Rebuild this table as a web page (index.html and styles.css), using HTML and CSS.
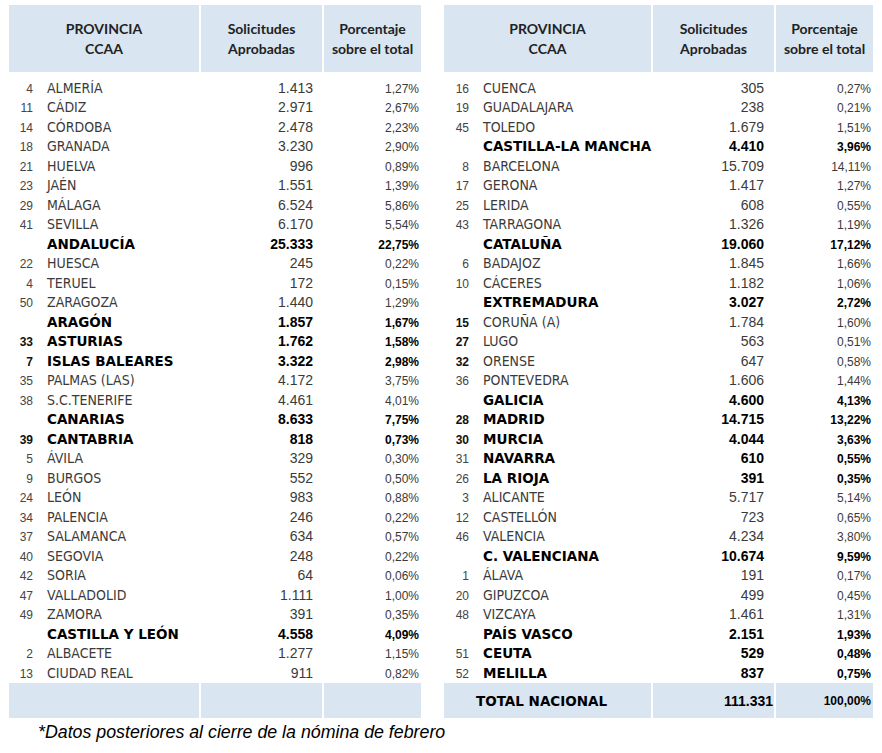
FILE: index.html
```html
<!DOCTYPE html>
<html lang="es">
<head>
<meta charset="utf-8">
<link rel="stylesheet" href="styles.css">
</head>
<body>
<div class="page">
  <div class="tables">
    <div class="tbl tbl-left">
      <div class="grid hdr">
        <div class="hc">PROVINCIA<br>CCAA</div>
        <div class="hc">Solicitudes<br>Aprobadas</div>
        <div class="hc">Porcentaje<br>sobre el total</div>
      </div>
      <div class="body">
        <div class="grid row"><div class="pc"><span class="code">4</span><span class="name">ALMERÍA</span></div><div class="val">1.413</div><div class="pct">1,27%</div></div>
        <div class="grid row"><div class="pc"><span class="code">11</span><span class="name">CÁDIZ</span></div><div class="val">2.971</div><div class="pct">2,67%</div></div>
        <div class="grid row"><div class="pc"><span class="code">14</span><span class="name">CÓRDOBA</span></div><div class="val">2.478</div><div class="pct">2,23%</div></div>
        <div class="grid row"><div class="pc"><span class="code">18</span><span class="name">GRANADA</span></div><div class="val">3.230</div><div class="pct">2,90%</div></div>
        <div class="grid row"><div class="pc"><span class="code">21</span><span class="name">HUELVA</span></div><div class="val">996</div><div class="pct">0,89%</div></div>
        <div class="grid row"><div class="pc"><span class="code">23</span><span class="name">JAÉN</span></div><div class="val">1.551</div><div class="pct">1,39%</div></div>
        <div class="grid row"><div class="pc"><span class="code">29</span><span class="name">MÁLAGA</span></div><div class="val">6.524</div><div class="pct">5,86%</div></div>
        <div class="grid row"><div class="pc"><span class="code">41</span><span class="name">SEVILLA</span></div><div class="val">6.170</div><div class="pct">5,54%</div></div>
        <div class="grid row bold"><div class="pc"><span class="code"></span><span class="name">ANDALUCÍA</span></div><div class="val">25.333</div><div class="pct">22,75%</div></div>
        <div class="grid row"><div class="pc"><span class="code">22</span><span class="name">HUESCA</span></div><div class="val">245</div><div class="pct">0,22%</div></div>
        <div class="grid row"><div class="pc"><span class="code">4</span><span class="name">TERUEL</span></div><div class="val">172</div><div class="pct">0,15%</div></div>
        <div class="grid row"><div class="pc"><span class="code">50</span><span class="name">ZARAGOZA</span></div><div class="val">1.440</div><div class="pct">1,29%</div></div>
        <div class="grid row bold"><div class="pc"><span class="code"></span><span class="name">ARAGÓN</span></div><div class="val">1.857</div><div class="pct">1,67%</div></div>
        <div class="grid row bold"><div class="pc"><span class="code cb">33</span><span class="name">ASTURIAS</span></div><div class="val">1.762</div><div class="pct">1,58%</div></div>
        <div class="grid row bold"><div class="pc"><span class="code cb">7</span><span class="name">ISLAS BALEARES</span></div><div class="val">3.322</div><div class="pct">2,98%</div></div>
        <div class="grid row"><div class="pc"><span class="code">35</span><span class="name">PALMAS (LAS)</span></div><div class="val">4.172</div><div class="pct">3,75%</div></div>
        <div class="grid row"><div class="pc"><span class="code">38</span><span class="name">S.C.TENERIFE</span></div><div class="val">4.461</div><div class="pct">4,01%</div></div>
        <div class="grid row bold"><div class="pc"><span class="code"></span><span class="name">CANARIAS</span></div><div class="val">8.633</div><div class="pct">7,75%</div></div>
        <div class="grid row bold"><div class="pc"><span class="code cb">39</span><span class="name">CANTABRIA</span></div><div class="val">818</div><div class="pct">0,73%</div></div>
        <div class="grid row"><div class="pc"><span class="code">5</span><span class="name">ÁVILA</span></div><div class="val">329</div><div class="pct">0,30%</div></div>
        <div class="grid row"><div class="pc"><span class="code">9</span><span class="name">BURGOS</span></div><div class="val">552</div><div class="pct">0,50%</div></div>
        <div class="grid row"><div class="pc"><span class="code">24</span><span class="name">LEÓN</span></div><div class="val">983</div><div class="pct">0,88%</div></div>
        <div class="grid row"><div class="pc"><span class="code">34</span><span class="name">PALENCIA</span></div><div class="val">246</div><div class="pct">0,22%</div></div>
        <div class="grid row"><div class="pc"><span class="code">37</span><span class="name">SALAMANCA</span></div><div class="val">634</div><div class="pct">0,57%</div></div>
        <div class="grid row"><div class="pc"><span class="code">40</span><span class="name">SEGOVIA</span></div><div class="val">248</div><div class="pct">0,22%</div></div>
        <div class="grid row"><div class="pc"><span class="code">42</span><span class="name">SORIA</span></div><div class="val">64</div><div class="pct">0,06%</div></div>
        <div class="grid row"><div class="pc"><span class="code">47</span><span class="name">VALLADOLID</span></div><div class="val">1.111</div><div class="pct">1,00%</div></div>
        <div class="grid row"><div class="pc"><span class="code">49</span><span class="name">ZAMORA</span></div><div class="val">391</div><div class="pct">0,35%</div></div>
        <div class="grid row bold"><div class="pc"><span class="code"></span><span class="name">CASTILLA Y LEÓN</span></div><div class="val">4.558</div><div class="pct">4,09%</div></div>
        <div class="grid row"><div class="pc"><span class="code">2</span><span class="name">ALBACETE</span></div><div class="val">1.277</div><div class="pct">1,15%</div></div>
        <div class="grid row"><div class="pc"><span class="code">13</span><span class="name">CIUDAD REAL</span></div><div class="val">911</div><div class="pct">0,82%</div></div>
      </div>
      <div class="grid foot">
        <div class="fc"></div>
        <div class="fc"></div>
        <div class="fc"></div>
      </div>
    </div>

    <div class="tbl tbl-right">
      <div class="grid hdr">
        <div class="hc">PROVINCIA<br>CCAA</div>
        <div class="hc">Solicitudes<br>Aprobadas</div>
        <div class="hc">Porcentaje<br>sobre el total</div>
      </div>
      <div class="body">
        <div class="grid row"><div class="pc"><span class="code">16</span><span class="name">CUENCA</span></div><div class="val">305</div><div class="pct">0,27%</div></div>
        <div class="grid row"><div class="pc"><span class="code">19</span><span class="name">GUADALAJARA</span></div><div class="val">238</div><div class="pct">0,21%</div></div>
        <div class="grid row"><div class="pc"><span class="code">45</span><span class="name">TOLEDO</span></div><div class="val">1.679</div><div class="pct">1,51%</div></div>
        <div class="grid row bold"><div class="pc"><span class="code"></span><span class="name">CASTILLA-LA MANCHA</span></div><div class="val">4.410</div><div class="pct">3,96%</div></div>
        <div class="grid row"><div class="pc"><span class="code">8</span><span class="name">BARCELONA</span></div><div class="val">15.709</div><div class="pct">14,11%</div></div>
        <div class="grid row"><div class="pc"><span class="code">17</span><span class="name">GERONA</span></div><div class="val">1.417</div><div class="pct">1,27%</div></div>
        <div class="grid row"><div class="pc"><span class="code">25</span><span class="name">LERIDA</span></div><div class="val">608</div><div class="pct">0,55%</div></div>
        <div class="grid row"><div class="pc"><span class="code">43</span><span class="name">TARRAGONA</span></div><div class="val">1.326</div><div class="pct">1,19%</div></div>
        <div class="grid row bold"><div class="pc"><span class="code"></span><span class="name">CATALUÑA</span></div><div class="val">19.060</div><div class="pct">17,12%</div></div>
        <div class="grid row"><div class="pc"><span class="code">6</span><span class="name">BADAJOZ</span></div><div class="val">1.845</div><div class="pct">1,66%</div></div>
        <div class="grid row"><div class="pc"><span class="code">10</span><span class="name">CÁCERES</span></div><div class="val">1.182</div><div class="pct">1,06%</div></div>
        <div class="grid row bold"><div class="pc"><span class="code"></span><span class="name">EXTREMADURA</span></div><div class="val">3.027</div><div class="pct">2,72%</div></div>
        <div class="grid row"><div class="pc"><span class="code cb">15</span><span class="name">CORUÑA (A)</span></div><div class="val">1.784</div><div class="pct">1,60%</div></div>
        <div class="grid row"><div class="pc"><span class="code cb">27</span><span class="name">LUGO</span></div><div class="val">563</div><div class="pct">0,51%</div></div>
        <div class="grid row"><div class="pc"><span class="code cb">32</span><span class="name">ORENSE</span></div><div class="val">647</div><div class="pct">0,58%</div></div>
        <div class="grid row"><div class="pc"><span class="code">36</span><span class="name">PONTEVEDRA</span></div><div class="val">1.606</div><div class="pct">1,44%</div></div>
        <div class="grid row bold"><div class="pc"><span class="code"></span><span class="name">GALICIA</span></div><div class="val">4.600</div><div class="pct">4,13%</div></div>
        <div class="grid row bold"><div class="pc"><span class="code cb">28</span><span class="name">MADRID</span></div><div class="val">14.715</div><div class="pct">13,22%</div></div>
        <div class="grid row bold"><div class="pc"><span class="code cb">30</span><span class="name">MURCIA</span></div><div class="val">4.044</div><div class="pct">3,63%</div></div>
        <div class="grid row bold"><div class="pc"><span class="code">31</span><span class="name">NAVARRA</span></div><div class="val">610</div><div class="pct">0,55%</div></div>
        <div class="grid row bold"><div class="pc"><span class="code">26</span><span class="name">LA RIOJA</span></div><div class="val">391</div><div class="pct">0,35%</div></div>
        <div class="grid row"><div class="pc"><span class="code">3</span><span class="name">ALICANTE</span></div><div class="val">5.717</div><div class="pct">5,14%</div></div>
        <div class="grid row"><div class="pc"><span class="code">12</span><span class="name">CASTELLÓN</span></div><div class="val">723</div><div class="pct">0,65%</div></div>
        <div class="grid row"><div class="pc"><span class="code">46</span><span class="name">VALENCIA</span></div><div class="val">4.234</div><div class="pct">3,80%</div></div>
        <div class="grid row bold"><div class="pc"><span class="code"></span><span class="name">C. VALENCIANA</span></div><div class="val">10.674</div><div class="pct">9,59%</div></div>
        <div class="grid row"><div class="pc"><span class="code">1</span><span class="name">ÁLAVA</span></div><div class="val">191</div><div class="pct">0,17%</div></div>
        <div class="grid row"><div class="pc"><span class="code">20</span><span class="name">GIPUZCOA</span></div><div class="val">499</div><div class="pct">0,45%</div></div>
        <div class="grid row"><div class="pc"><span class="code">48</span><span class="name">VIZCAYA</span></div><div class="val">1.461</div><div class="pct">1,31%</div></div>
        <div class="grid row bold"><div class="pc"><span class="code"></span><span class="name">PAÍS VASCO</span></div><div class="val">2.151</div><div class="pct">1,93%</div></div>
        <div class="grid row bold"><div class="pc"><span class="code">51</span><span class="name">CEUTA</span></div><div class="val">529</div><div class="pct">0,48%</div></div>
        <div class="grid row bold"><div class="pc"><span class="code">52</span><span class="name">MELILLA</span></div><div class="val">837</div><div class="pct">0,75%</div></div>
      </div>
      <div class="grid foot total">
        <div class="fc tname">TOTAL NACIONAL</div>
        <div class="fc tval">111.331</div>
        <div class="fc tpct">100,00%</div>
      </div>
    </div>
  </div>
  <p class="note">*Datos posteriores al cierre de la nómina de febrero</p>
</div>
</body>
</html>
```

FILE: styles.css
```css
html, body {
  margin: 0;
  padding: 0;
  background: #ffffff;
}

.page {
  padding: 5px 0 0 9px;
}

.tables {
  display: flex;
  align-items: flex-start;
  gap: 23px;
}

.tbl {
  display: flex;
  flex-direction: column;
}

.tbl-left {
  --c1: 190px;
  --cw: 24px;
  --vpad: 9px;
}

.tbl-right {
  --c1: 207px;
  --cw: 25px;
  --vpad: 10px;
}

.grid {
  display: grid;
  grid-template-columns: var(--c1) 121px 97px;
  column-gap: 2px;
}

.hdr {
  height: 67px;
}

.hc {
  background: #d9e5f0;
  display: flex;
  align-items: center;
  justify-content: center;
  text-align: center;
  font-family: Lato, "Open Sans", sans-serif;
  font-weight: 700;
  font-size: 14px;
  line-height: 20px;
  color: #222222;
}

.body {
  padding-top: 6.5px;
}

.row {
  height: 19.5px;
  line-height: 19.5px;
  align-items: baseline;
  color: #3a3a3a;
}

.pc {
  display: flex;
  align-items: baseline;
  white-space: nowrap;
}

.code {
  width: var(--cw);
  flex: none;
  text-align: right;
  font-family: "Liberation Sans", Arial, sans-serif;
  font-size: 12px;
  color: #444444;
}

.code.cb {
  font-weight: 700;
  color: #111111;
}

.name {
  margin-left: 14px;
  font-family: "DejaVu Sans Condensed", "DejaVu Sans", Verdana, sans-serif;
  font-size: 14px;
}

.val {
  text-align: right;
  padding-right: var(--vpad);
  font-family: "Liberation Sans", Arial, sans-serif;
  font-size: 14px;
}

.pct {
  text-align: right;
  padding-right: 2px;
  font-family: "Liberation Sans", Arial, sans-serif;
  font-size: 12px;
}

.row.bold {
  color: #000000;
}

.row.bold .name {
  font-family: "DejaVu Sans", Verdana, sans-serif;
  font-size: 13.5px;
}

.row.bold .name,
.row.bold .val,
.row.bold .pct {
  font-weight: 700;
}

.foot {
  height: 35px;
}

.fc {
  background: #d9e5f0;
}

.total .fc {
  display: flex;
  align-items: center;
  color: #000000;
  font-weight: 700;
}

.tname {
  padding-left: 32px;
  font-family: "DejaVu Sans", Verdana, sans-serif;
  font-size: 13.5px;
}

.tval {
  justify-content: flex-end;
  padding-right: 1px;
  font-family: "Liberation Sans", Arial, sans-serif;
  font-size: 14px;
}

.tpct {
  justify-content: flex-end;
  padding-right: 2px;
  font-family: "Liberation Sans", Arial, sans-serif;
  font-size: 12px;
}

.note {
  margin: 4px 0 0 29px;
  font-family: "Liberation Sans", Arial, sans-serif;
  font-style: italic;
  font-size: 17.8px;
  line-height: 21px;
  color: #000000;
}
```
